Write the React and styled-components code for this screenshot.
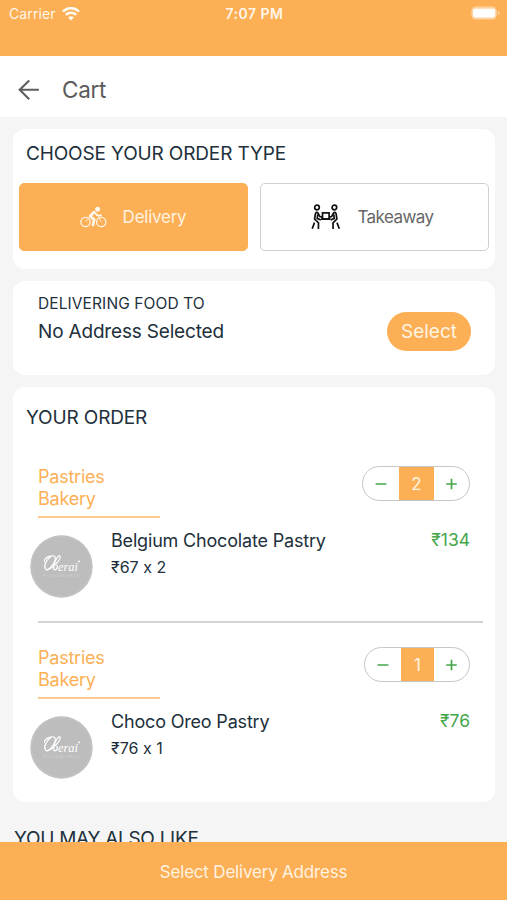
import * as React from "react"
import styled, { createGlobalStyle } from "styled-components"

const orange = "#fcaf54"
const ink = "#21303b"
const green = "#46a64c"

const GlobalStyle = createGlobalStyle`
  * {
    box-sizing: border-box;
  }

  body {
    margin: 0;
    background: #f5f5f5;
    font-family: Inter, "Noto Sans", sans-serif;
    font-variant-ligatures: no-contextual;
    color: ${ink};
  }

  button {
    font-family: inherit;
    padding: 0;
    border: none;
    background: none;
  }

  h1, h2, p {
    margin: 0;
    font-weight: 400;
  }
`

const Screen = styled.div`
  width: 507px;
  height: 900px;
  display: flex;
  flex-direction: column;
  overflow: hidden;
`

const StatusBar = styled.div`
  flex: none;
  height: 56px;
  padding: 4px 7px 0 9px;
  display: grid;
  grid-template-columns: 1fr auto 1fr;
  align-items: start;
  background: ${orange};
  color: #fff6ea;
  font-size: 14px;
  line-height: 20px;
`

const Carrier = styled.div`
  display: flex;
  align-items: center;
  gap: 6px;
  letter-spacing: 0.1px;
`

const Clock = styled.div`
  font-weight: 600;
  font-size: 14px;
  letter-spacing: 0.5px;
`

const Battery = styled.svg`
  justify-self: end;
  margin-top: 1px;
`

const NavBar = styled.header`
  flex: none;
  height: 61px;
  padding: 6px 18px 0;
  display: flex;
  align-items: center;
  gap: 22px;
  background: #fff;
  color: #5a5a5a;

  h1 {
    font-size: 22.5px;
    line-height: 30px;
    letter-spacing: -0.3px;
  }
`

const Content = styled.main`
  flex: 1;
  min-height: 0;
  overflow: hidden;
  padding: 12px 12px 0 13px;
  display: flex;
  flex-direction: column;
  gap: 12px;
`

const Card = styled.section`
  flex: none;
  height: ${props => props.$height}px;
  border-radius: 12px;
  background: #fff;
`

const Title = styled.h2`
  font-size: 19px;
  line-height: 24px;
  letter-spacing: -0.14px;
`

const OrderType = styled(Card)`
  padding: 13px 6px 0 6px;

  ${Title} {
    padding-left: 7px;
  }
`

const TypeButtons = styled.div`
  margin-top: 17px;
  display: grid;
  grid-template-columns: 1fr 1fr;
  gap: 12px;
`

const TypeButton = styled.button`
  height: 68px;
  padding-right: ${props => (props.$active ? 1 : 4)}px;
  display: flex;
  align-items: center;
  justify-content: center;
  gap: 16px;
  border-radius: 5px;
  border: 1.5px solid ${props => (props.$active ? orange : "#d0d0d0")};
  background: ${props => (props.$active ? orange : "#fff")};
  color: ${props => (props.$active ? "#fff3e2" : "#666")};
  font-size: 17px;
  letter-spacing: ${props => (props.$active ? -0.25 : -0.55)}px;
`

const Address = styled(Card)`
  padding: 12px 24px 0 25px;
  display: flex;
  justify-content: space-between;
  align-items: flex-start;
`

const AddressLabel = styled.p`
  font-size: 15.5px;
  line-height: 22px;
  letter-spacing: 0.1px;
`

const AddressValue = styled.p`
  margin-top: 5px;
  font-size: 19px;
  line-height: 24px;
  letter-spacing: -0.18px;
`

const SelectButton = styled.button`
  width: 84px;
  height: 39px;
  margin-top: 19px;
  border-radius: 20px;
  background: ${orange};
  color: #fff3e2;
  font-size: 19px;
`

const Order = styled(Card)`
  padding: 19px 12px 0 13px;
`

const OrderItem = styled.article`
  height: 181px;
  margin-left: 12px;
`

const Items = styled.div`
  margin-top: 36px;
`

const ItemHead = styled.div`
  height: 53px;
  padding-right: 13px;
  display: flex;
  justify-content: space-between;
  align-items: flex-start;
`

const Vendor = styled.div`
  width: 122px;
  height: 52px;
  border-bottom: 2px solid #fdc98c;
  color: ${orange};
  font-size: 18px;
  line-height: 22px;
  letter-spacing: -0.22px;
`

const Stepper = styled.div`
  height: 35px;
  display: flex;
  border: 1px solid #c6c6c6;
  border-radius: 18px;
  overflow: hidden;
`

const StepButton = styled.button`
  width: ${props => props.$width || 35}px;
  display: flex;
  align-items: center;
  justify-content: center;
`

const Quantity = styled.span`
  width: ${props => props.$width}px;
  background: ${orange};
  color: #fff3e2;
  font-size: 17px;
  line-height: 34px;
  text-align: center;
`

const ItemBody = styled.div`
  height: 102px;
  margin-left: -8px;
  padding: 10px 13px 0 0;
  display: flex;
  align-items: flex-start;
`

const Logo = styled.svg`
  flex: none;
  margin-top: 6px;
`

const ItemText = styled.div`
  flex: 1;
  margin-left: 18px;
`

const ItemName = styled.p`
  font-size: 18px;
  line-height: 24px;
  letter-spacing: -0.18px;
`

const ItemPrice = styled.p`
  margin-top: 3px;
  font-size: 16px;
  line-height: 22px;
`

const ItemTotal = styled.p`
  color: ${green};
  font-size: 17.5px;
  line-height: 22px;
`

const Divider = styled.div`
  height: 2px;
  background: #d3d3d3;
`

const MoreTitle = styled(Title)`
  margin-top: 13px;
  padding-left: 1px;
  letter-spacing: -0.28px;
`

const Footer = styled.button`
  && {
    flex: none;
    height: 58px;
    padding-top: 1px;
    background: ${orange};
    color: #fff3e2;
    font-size: 17px;
    letter-spacing: -0.2px;
  }
`

const WifiIcon = () => (
  <svg width="18" height="14" viewBox="0 0 18 14" fill="none" stroke="#fffaf3">
    <path d="M1 4.6C5.5 0.1 12.5 0.1 17 4.6" strokeWidth="2.5" />
    <path d="M3.8 7.8C6.7 5 11.3 5 14.2 7.8" strokeWidth="2.5" />
    <path d="M9 13.5L6 10.4Q9 8.2 12 10.4Z" fill="#fffaf3" stroke="none" />
  </svg>
)

const BatteryIcon = () => (
  <Battery width="29" height="15" viewBox="0 0 29 15">
    <rect x="0.3" y="1.5" width="25.5" height="13" rx="4.5" fill="#fdd3a0" />
    <rect x="2" y="3.7" width="22.2" height="8.8" rx="2.4" fill="#fff" />
    <path d="M27 6v4q1.6-.6 1.6-2t-1.6-2" fill="#fdd3a0" />
  </Battery>
)

const BackIcon = () => (
  <svg width="22" height="22" viewBox="0 0 22 22" fill="none" stroke="#5f5f5f" strokeWidth="2.1">
    <path d="M20.9 10.8H2M11.2 1.4L1.7 10.8L11.2 20.2" />
  </svg>
)

const BikeIcon = () => (
  <svg width="27" height="22" viewBox="0 0 27 22" fill="none" stroke="#fff6ea">
    <circle cx="5.5" cy="16" r="4.6" strokeWidth="1.3" />
    <circle cx="21.2" cy="16" r="4.6" strokeWidth="1.3" />
    <circle cx="17.6" cy="3.2" r="2.5" fill="#fff6ea" stroke="none" />
    <path d="M13.8 6.2L10.2 10.2L14.2 13.6L13 19" strokeWidth="2.8" strokeLinejoin="round" strokeLinecap="round" />
    <path d="M14.4 6.2L17.2 9.4H21" strokeWidth="1.8" strokeLinejoin="round" strokeLinecap="round" />
    <path d="M5.5 16L9 11.2M18.2 9.6L21.2 16" strokeWidth="0.8" />
  </svg>
)

const CarryIcon = () => (
  <svg width="30" height="26" viewBox="0 0 30 26" fill="none" stroke="#111" strokeWidth="1.7">
    <circle cx="6" cy="3.5" r="2.3" />
    <circle cx="23.4" cy="3.5" r="2.3" />
    <rect x="11.5" y="8.9" width="6.6" height="6.2" />
    <path d="M10 15.1H19.6" />
    <path d="M11.4 13.2L8.9 12.6L7 9Q5.2 7.4 4.4 9.8L3.6 15L7.5 18.8L7.4 25M6.8 10.5L6.2 14.4L9.8 16M3.5 18.6L1.2 24.8" />
    <path d="M18.1 13.2L20.6 12.6L22.5 9Q24.3 7.4 25.1 9.8L25.9 15L22 18.8L22.1 25M22.7 10.5L23.3 14.4L19.7 16M26 18.6L28.3 24.8" />
  </svg>
)

const BrandLogo = () => (
  <Logo width="63" height="63" viewBox="0 0 63 63">
    <circle cx="31.5" cy="31.5" r="31.2" fill="#bdbdbd" />
    <circle cx="31.5" cy="31.5" r="30" fill="none" stroke="#c9c9c9" strokeWidth="0.6" />
    <g fill="none" stroke="#fff" strokeWidth="1.2" strokeLinecap="round">
      <path d="M21 21.5C16 25 13.4 31 15.5 34C18 37.5 27 26 25 22C22.5 19 14 22.5 14.5 26.5" />
      <path d="M17 35C22 34 31.5 24.5 30 21C27 20 22.5 31 24 34.5C26 36 28.5 32 26.8 30.2" />
    </g>
    <text x="28" y="35.5" fill="#fff" fontFamily="Liberation Serif, serif" fontStyle="italic" fontSize="13" textLength="20" lengthAdjust="spacingAndGlyphs">
      erai
    </text>
    <path d="M48.6 27.2l1-1.5" stroke="#fff" strokeWidth="1.5" />
    <text x="13" y="42" fill="#d2d2d2" fontFamily="Liberation Sans, sans-serif" fontSize="4.4" textLength="37">
      FOODWORLD
    </text>
  </Logo>
)

const MinusIcon = () => (
  <svg width="12" height="12" viewBox="0 0 12 12" stroke={green} strokeWidth="1.7">
    <path d="M0.6 6H11.4" />
  </svg>
)

const PlusIcon = () => (
  <svg width="12" height="12" viewBox="0 0 12 12" stroke={green} strokeWidth="1.7">
    <path d="M0.2 6H10.8M5.5 0.8V11.2" />
  </svg>
)

const items = [
  { name: "Belgium Chocolate Pastry", price: 67, quantity: 2, boxWidth: 35 },
  { name: "Choco Oreo Pastry", price: 76, quantity: 1, boxWidth: 33 },
]

const CartItem = ({ item, first }) => (
  <OrderItem>
    <ItemHead>
      <Vendor>
        Pastries
        <br />
        Bakery
      </Vendor>
      <Stepper>
        <StepButton $width={36} aria-label="Remove one">
          <MinusIcon />
        </StepButton>
        <Quantity $width={item.boxWidth}>{item.quantity}</Quantity>
        <StepButton aria-label="Add one">
          <PlusIcon />
        </StepButton>
      </Stepper>
    </ItemHead>
    <ItemBody>
      <BrandLogo />
      <ItemText>
        <ItemName>{item.name}</ItemName>
        <ItemPrice>{`₹${item.price} x ${item.quantity}`}</ItemPrice>
      </ItemText>
      <ItemTotal>{`₹${item.price * item.quantity}`}</ItemTotal>
    </ItemBody>
    {first && <Divider />}
  </OrderItem>
)

const App = () => (
  <Screen>
    <GlobalStyle />
    <StatusBar>
      <Carrier>
        Carrier
        <WifiIcon />
      </Carrier>
      <Clock>7:07 PM</Clock>
      <BatteryIcon />
    </StatusBar>
    <NavBar>
      <BackIcon />
      <h1>Cart</h1>
    </NavBar>
    <Content>
      <OrderType $height={140}>
        <Title>CHOOSE YOUR ORDER TYPE</Title>
        <TypeButtons>
          <TypeButton $active>
            <BikeIcon />
            Delivery
          </TypeButton>
          <TypeButton>
            <CarryIcon />
            Takeaway
          </TypeButton>
        </TypeButtons>
      </OrderType>
      <Address $height={94}>
        <div>
          <AddressLabel>DELIVERING FOOD TO</AddressLabel>
          <AddressValue>No Address Selected</AddressValue>
        </div>
        <SelectButton>Select</SelectButton>
      </Address>
      <Order $height={415}>
        <Title>YOUR ORDER</Title>
        <Items>
          {items.map((item, index) => (
            <CartItem key={item.name} item={item} first={index === 0} />
          ))}
        </Items>
      </Order>
      <MoreTitle>YOU MAY ALSO LIKE</MoreTitle>
    </Content>
    <Footer>Select Delivery Address</Footer>
  </Screen>
)

export default App
